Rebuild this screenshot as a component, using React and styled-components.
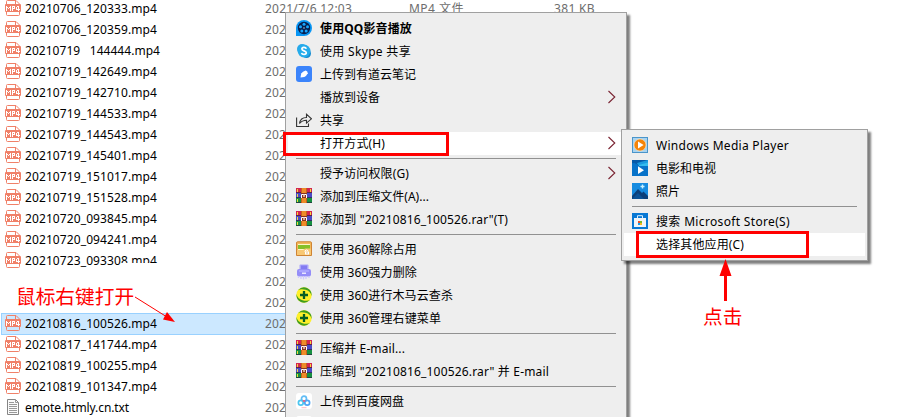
import React, { useLayoutEffect, useRef, useState } from "react";
import styled, { createGlobalStyle } from "styled-components";

const GlobalStyle = createGlobalStyle`
  * {
    box-sizing: border-box;
  }
  body {
    margin: 0;
    overflow: hidden;
    background-color: #fff;
  }
`;

const Screen = styled("div")`
  position: relative;
  width: 900px;
  height: 417px;
  overflow: hidden;
  font-family: "Noto Sans", "Noto Sans CJK SC", sans-serif;
  font-size: 12px;
  color: #000;
`;

const FileList = styled("div")`
  margin-top: -2px;
`;

const FileRow = styled("div")`
  display: grid;
  grid-template-columns: 16px 236px 140px 141px 60px;
  column-gap: 4px;
  align-items: start;
  height: ${(props) => (props.$selected ? "22px" : "21px")};
  margin: 0 0 ${(props) => (props.$selected ? "-1px" : "0")} 1px;
  padding-left: 4px;
  width: 620px;
  box-shadow: ${(props) => (props.$selected ? "inset 0 0 0 1px #99d1ff" : "none")};
  background-color: ${(props) => (props.$selected ? "#cce8ff" : "transparent")};
`;

const FileIcon = styled("div")`
  display: flex;
  grid-column: 1;
  margin-top: 2px;
`;

const FileName = styled("div")`
  display: flex;
  grid-column: 2;
  height: 21px;
`;

const Detail = styled("div")`
  color: #6d6d6d;
  grid-column: ${(props) => props.$column};
  height: 21px;
`;

const Eraser = styled("div")`
  position: absolute;
  left: 121px;
  top: 263px;
  width: 42px;
  height: 7px;
  background-color: #fff;
`;

const Label = styled("span")`
  display: inline-block;
  white-space: pre;
  line-height: 21px;
  font-weight: ${(props) => (props.$bold ? 700 : 400)};
`;

const Menu = styled("div")`
  position: absolute;
  left: ${(props) => props.$left}px;
  top: ${(props) => props.$top}px;
  width: ${(props) => props.$width}px;
  padding: 4px 2px;
  background-color: #eee;
  border: 1px solid #a0a0a0;
  box-shadow: 3px 3px 2px rgba(0, 0, 0, 0.5);
`;

const MenuItem = styled("div")`
  display: flex;
  align-items: center;
  height: 23px;
  padding: 0 8px;
  background-color: ${(props) => (props.$active ? "#fff" : "transparent")};
`;

const IconSlot = styled("div")`
  display: flex;
  width: 16px;
  height: 16px;
  margin: 0 8px 1px 0;
`;

const Separator = styled("div")`
  height: 1px;
  margin: 3px 8px;
  background-color: #919191;
`;

const Chevron = styled("svg")`
  margin-left: auto;
  margin-bottom: 1px;
`;

const RedFrame = styled("div")`
  position: absolute;
  left: ${(props) => props.$left}px;
  top: ${(props) => props.$top}px;
  width: ${(props) => props.$width}px;
  height: ${(props) => props.$height}px;
  border: 3px solid #f00;
`;

const Note = styled("div")`
  position: absolute;
  left: ${(props) => props.$left}px;
  top: ${(props) => props.$top}px;
  font-family: "Noto Sans CJK SC", sans-serif;
  font-size: 19.7px;
  line-height: 24px;
  white-space: nowrap;
  color: #f00;
`;

const Arrows = styled("svg")`
  position: absolute;
  left: 0;
  top: 0;
`;

// spreads the letters so that the text takes exactly `width` pixels
const Text = ({ children, width, bold }) => {
  const ref = useRef(null);
  const [spacing, setSpacing] = useState(0);

  useLayoutEffect(() => {
    const natural = ref.current.getBoundingClientRect().width;
    setSpacing((width - natural) / children.length);
  }, []);

  return (
    <Label ref={ref} $bold={bold} style={{ letterSpacing: `${spacing}px` }}>
      {children}
    </Label>
  );
};

const Mp4Icon = () => (
  <svg width="16" height="16" viewBox="0 0 16 16" fill="none" stroke="#f08068">
    <path d="M1.5 5V1.5Q1.5.5 2.5.5H11L14.5 4V5M1.5 11V14.5Q1.5 15.5 2.5 15.5H13.5Q14.5 15.5 14.5 14.5V11M10.5.5V4.5H14.5" />
    <rect x="0" y="4" width="16" height="8" rx="1" fill="#f08068" stroke="none" />
    <g fill="#fff" stroke="none" shapeRendering="crispEdges">
      <path d="M1 6h1v5h-1zM5 6h1v5h-1zM2 7h1v1h-1zM4 7h1v1h-1zM3 8h1v1h-1z" />
      <path d="M7 6h1v5h-1zM8 6h2v1h-2zM9 7h1v1h-1zM8 8h2v1h-2z" />
      <path d="M11 7h1v3h-1zM12 6h1v1h-1zM13 6h1v5h-1zM12 9h3v1h-3z" />
    </g>
  </svg>
);

const TxtIcon = () => (
  <svg width="16" height="16" viewBox="0 0 16 16">
    <path d="M2.5.5H10.5L13.5 3.5V15.5H2.5Z" fill="#fafafa" stroke="#858585" />
    <path d="M10.5.5V3.5H13.5M4 3.5H9M4 5.5H12M4 7.5H12M4 9.5H12M4 11.5H12M4 13.5H12" fill="none" stroke="#999" />
  </svg>
);

const QQPlayerIcon = () => (
  <svg width="16" height="16" viewBox="0 0 16 16">
    <path d="M0 16V8A8 8 0 1 1 8 16Z" fill="#0796f5" />
    <circle cx="8" cy="8" r="6.2" fill="#071f50" />
    <g fill="#16a6ff">
      <circle cx="8" cy="4.3" r="1.5" />
      <circle cx="4.5" cy="6.8" r="1.5" />
      <circle cx="11.5" cy="6.8" r="1.5" />
      <circle cx="5.8" cy="11" r="1.5" />
      <circle cx="10.2" cy="11" r="1.5" />
    </g>
    <circle cx="8" cy="8" r=".7" fill="#d5efff" />
  </svg>
);

const SkypeIcon = () => (
  <svg width="16" height="16" viewBox="0 0 16 16">
    <circle cx="6" cy="6" r="5" fill="#28a8ea" />
    <circle cx="10.5" cy="10.5" r="4.5" fill="#158bd0" />
    <circle cx="8" cy="8" r="6.4" fill="#25aceb" />
    <path d="M10.3 5.8C9.6 3.9 5.9 4 5.9 6.1C5.9 8.2 10.3 7.5 10.3 9.8C10.3 12 6 12 5.6 9.9" fill="none" stroke="#fff" strokeWidth="1.7" />
  </svg>
);

const YoudaoIcon = () => (
  <svg width="16" height="16" viewBox="0 0 16 16">
    <rect width="16" height="16" rx="3" fill="#3b84fb" />
    <path d="M4.5 11.5L5.2 7.4Q6.5 5.5 9.7 4.6Q11.7 5.3 11.8 7.2Q10.4 10 8.3 11Z" fill="#fff" />
  </svg>
);

const ShareIcon = () => (
  <svg width="16" height="16" viewBox="0 0 16 16" fill="none" stroke="#333" strokeWidth="1.1">
    <path d="M.6 5.5V14.5H12.5V11.5M3.5 11.5Q4.4 5.5 10.5 5.5V2.2L15.4 6.8L10.5 11.1V8.2Q6 8.2 3.5 11.5Z" />
  </svg>
);

const RarIcon = () => (
  <svg width="16" height="16" viewBox="0 0 16 16">
    <rect width="16" height="5" fill="#d3244f" />
    <rect width="16" height="5" y="5" fill="#4a4ac4" />
    <rect width="16" height="5" y="10" fill="#169040" />
    <path d="M0 4.5H16M0 9.5H16M0 14.5H16" stroke="#292440" strokeOpacity=".7" />
    <path d="M1.5 1V4M1.5 6V9M1.5 11V14M14.5 1V4" stroke="#f0d83b" />
    <rect x="5" width="6" height="15" fill="#c4601f" />
    <rect x="6" width="4" height="15" fill="#ee8b28" />
    <rect x="5" y="5" width="6" height="5" fill="#8a3220" />
    <path d="M5.5 10V6.5H10.5V10" fill="none" stroke="#fff" />
    <path d="M8 6V9" stroke="#f5d9c8" strokeWidth="1.4" />
  </svg>
);

const FolderIcon = () => (
  <svg width="16" height="16" viewBox="0 0 16 16">
    <path d="M.5 2Q.5.8 1.5.8H14.5Q15.5.8 15.5 2V14.5H.5Z" fill="#f3b85c" stroke="#cf8434" />
    <rect x="2" y="3" width="12" height="8" fill="#fff5c6" />
    <rect x="2" y="4" width="12" height="4" fill="#86c02a" />
    <path d="M1 9H7L9 7.5H15V14H1Z" fill="#f8c874" />
    <path d="M9 10.8V9.8Q10.7 8 12.2 9.8" fill="none" stroke="#fff" />
    <rect x="9" y="10.5" width="4" height="3" fill="#fff" />
    <rect x="10.5" y="11.5" width="1" height="1" fill="#c77b25" />
  </svg>
);

const ShredderIcon = () => (
  <svg width="16" height="16" viewBox="0 0 16 16">
    <rect x="3.5" y=".5" width="9" height="6" rx="1" fill="#a9a4fa" />
    <rect x="5" y="1.5" width="6" height="4" fill="#837bf1" />
    <rect x="1" y="5" width="14" height="7.5" rx="2" fill="#958ef8" />
    <rect x="3" y="6" width="10" height="2" fill="#a9a4ff" />
    <rect x="6" y="8.5" width="4" height="1.5" fill="#e9e7ff" />
    <path d="M2.5 12V14M5 12V15M7.5 12V15.5M10 12V15M13 12V14" stroke="#cdc9ff" strokeWidth="1.3" />
  </svg>
);

const Icon360 = () => (
  <svg width="16" height="16" viewBox="0 0 16 16">
    <circle cx="8" cy="8" r="7.7" fill="#fff02a" />
    <path d="M2 3.2Q6-1 11 1Q16 3 15.6 9Q14.5 4 9.5 2.8Q5 1.6 2 3.2Z" fill="#3f9d22" />
    <path d="M14 12.8Q10 17 5 15Q0 13 .4 7Q1.5 12 6.5 13.2Q11 14.4 14 12.8Z" fill="#3f9d22" />
    <path d="M4 8H12M8 4V12" stroke="#075f25" strokeWidth="2.3" />
  </svg>
);

const BaiduIcon = () => (
  <svg width="16" height="16" viewBox="0 0 16 16" fill="none" strokeWidth="1.7">
    <rect width="16" height="16" rx="3" fill="#fff" />
    <circle cx="8" cy="5.7" r="2.5" stroke="#62bdf5" />
    <circle cx="4.8" cy="9.7" r="2.4" stroke="#4cc6f0" />
    <circle cx="11.2" cy="9.7" r="2.4" stroke="#4ea6f5" />
    <path d="M6.3 7.7Q8 6.3 9.7 7.7L8 9.3Z" fill="#f1607e" />
    <path d="M5.5 14.7H10.5" stroke="#f7a5b4" strokeWidth=".8" />
  </svg>
);

const MediaPlayerIcon = () => (
  <svg width="16" height="16" viewBox="0 0 16 16">
    <rect x=".5" y=".5" width="15" height="15" fill="#a9d3ef" stroke="#4b95ca" />
    <circle cx="8" cy="8" r="6" fill="#f48409" stroke="#fff2d8" strokeWidth=".5" />
    <path d="M6 4.4L11.6 8L6 11.6Z" fill="#fff" />
  </svg>
);

const MoviesIcon = () => (
  <svg width="16" height="16" viewBox="0 0 16 16">
    <rect width="16" height="16" fill="#0870c5" />
    <path d="M0 0H16V5H5L3 3H0Z" fill="#075ba9" />
    <path d="M5 3L16 0V5H6Z" fill="#1b9bdf" />
    <path d="M7 5L16 2.5V6H7Z" fill="#35bdef" />
    <path d="M0 4H4.5L6.5 6H16V16H0Z" fill="#0873c9" />
    <path d="M6 6.3L12 10.3L6 14Z" fill="#fff" />
  </svg>
);

const PhotosIcon = () => (
  <svg width="16" height="16" viewBox="0 0 16 16">
    <rect width="16" height="16" fill="#168be0" />
    <path d="M0 13L6 6L10 10L11.5 8.5L16 13V16H0Z" fill="#0c3f79" />
    <path d="M0 16L6 10L12 16Z" fill="#0b5196" />
    <path d="M10.5 1.5V5.5M8.5 3.5H12.5" stroke="#c9f1ff" strokeWidth="1.4" />
  </svg>
);

const StoreIcon = () => (
  <svg width="16" height="16" viewBox="0 0 16 16">
    <rect width="16" height="16" fill="#0878d4" />
    <path d="M5.5 5V2.7H10.5V5" fill="none" stroke="#d9efff" />
    <path d="M2 5H14V14H2Z" fill="#f1f4f7" />
    <rect x="6" y="8" width="2" height="2" fill="#ef5128" />
    <rect x="8" y="8" width="2" height="2" fill="#7bb928" />
    <rect x="6" y="10" width="2" height="2" fill="#16a0e7" />
    <rect x="8" y="10" width="2" height="2" fill="#f6b91b" />
  </svg>
);

const files = [
  { name: "20210706_120333.mp4", date: "2021/7/6 12:03", type: "MP4 文件", size: "381 KB" },
  { name: "20210706_120359.mp4" },
  { name: "20210719   144444.mp4", width: 135 },
  { name: "20210719_142649.mp4" },
  { name: "20210719_142710.mp4" },
  { name: "20210719_144533.mp4" },
  { name: "20210719_144543.mp4" },
  { name: "20210719_145401.mp4" },
  { name: "20210719_151017.mp4" },
  { name: "20210719_151528.mp4" },
  { name: "20210720_093845.mp4" },
  { name: "20210720_094241.mp4" },
  { name: "20210723_093308.mp4" },
  {},
  {},
  { name: "20210816_100526.mp4", selected: true },
  { name: "20210817_141744.mp4" },
  { name: "20210819_100255.mp4" },
  { name: "20210819_101347.mp4" },
  { name: "emote.htmly.cn.txt", width: 104, icon: TxtIcon },
];

const menuItems = [
  { text: "使用QQ影音播放", width: 92, icon: QQPlayerIcon, bold: true },
  { text: "使用 Skype 共享", width: 91, icon: SkypeIcon },
  { text: "上传到有道云笔记", width: 96, icon: YoudaoIcon },
  { text: "播放到设备", width: 60, arrow: true },
  { text: "共享", width: 24, icon: ShareIcon },
  { text: "打开方式(H)", width: 65, arrow: true, active: true },
  null,
  { text: "授予访问权限(G)", width: 89, arrow: true },
  { text: "添加到压缩文件(A)...", width: 109, icon: RarIcon },
  { text: '添加到 "20210816_100526.rar"(T)', width: 188, icon: RarIcon },
  null,
  { text: "使用 360解除占用", width: 97, icon: FolderIcon },
  { text: "使用 360强力删除", width: 97, icon: ShredderIcon },
  { text: "使用 360进行木马云查杀", width: 133, icon: Icon360 },
  { text: "使用 360管理右键菜单", width: 121, icon: Icon360 },
  null,
  { text: "压缩并 E-mail...", width: 85, icon: RarIcon },
  { text: '压缩到 "20210816_100526.rar" 并 E-mail', width: 229, icon: RarIcon },
  null,
  { text: "上传到百度网盘", width: 84, icon: BaiduIcon },
  { icon: BaiduIcon },
];

const openWithItems = [
  { text: "Windows Media Player", width: 133, icon: MediaPlayerIcon },
  { text: "电影和电视", width: 60, icon: MoviesIcon },
  { text: "照片", width: 24, icon: PhotosIcon },
  null,
  { text: "搜索 Microsoft Store(S)", width: 134, icon: StoreIcon },
  { text: "选择其他应用(C)", width: 88, active: true },
];

const MenuItems = ({ items }) =>
  items.map((item, index) => {
    if (!item) return <Separator key={index} />;
    const Icon = item.icon;
    return (
      <MenuItem key={index} $active={item.active}>
        <IconSlot>{Icon ? <Icon /> : null}</IconSlot>
        {item.text ? (
          <Text width={item.width} bold={item.bold}>
            {item.text}
          </Text>
        ) : null}
        {item.arrow ? (
          <Chevron width="9" height="14" viewBox="0 0 9 14">
            <path d="M1.5 1L7.8 7L1.5 13" fill="none" stroke="#7a2432" strokeWidth="1.1" />
          </Chevron>
        ) : null}
      </MenuItem>
    );
  });

const File = ({ name, width = 132, date, type, size, selected, icon }) => {
  const Icon = icon || Mp4Icon;
  return (
    <FileRow $selected={selected}>
      <FileIcon>{name ? <Icon /> : null}</FileIcon>
      <FileName>{name ? <Text width={width}>{name}</Text> : null}</FileName>
      <Detail $column={3}>
        <Text width={date ? 87 : 21}>{date || "202"}</Text>
      </Detail>
      <Detail $column={4}>{type ? <Text width={55}>{type}</Text> : null}</Detail>
      <Detail $column={5}>{size ? <Text width={41}>{size}</Text> : null}</Detail>
    </FileRow>
  );
};

const App = () => (
  <Screen>
    <GlobalStyle />
    <FileList>
      {files.map((file, index) => (
        <File key={index} {...file} />
      ))}
    </FileList>
    <Eraser />
    <Menu $left={285} $top={12} $width={342}>
      <MenuItems items={menuItems} />
    </Menu>
    <Menu $left={621} $top={129} $width={247}>
      <MenuItems items={openWithItems} />
    </Menu>
    <RedFrame $left={283} $top={132} $width={166} $height={24} />
    <RedFrame $left={636} $top={231} $width={173} $height={27} />
    <Note $left={16} $top={284}>鼠标右键打开</Note>
    <Note $left={703} $top={304}>点击</Note>
    <Arrows width="900" height="417" viewBox="0 0 900 417" fill="#f00" stroke="#f00">
      <path d="M135 297L167 317" />
      <path d="M167 312L175 322L163 319.5Z" stroke="none" />
      <path d="M725.5 274V301" strokeWidth="3" />
      <path d="M725.5 259L731.5 276H719.5Z" stroke="none" />
    </Arrows>
  </Screen>
);

export default App;
